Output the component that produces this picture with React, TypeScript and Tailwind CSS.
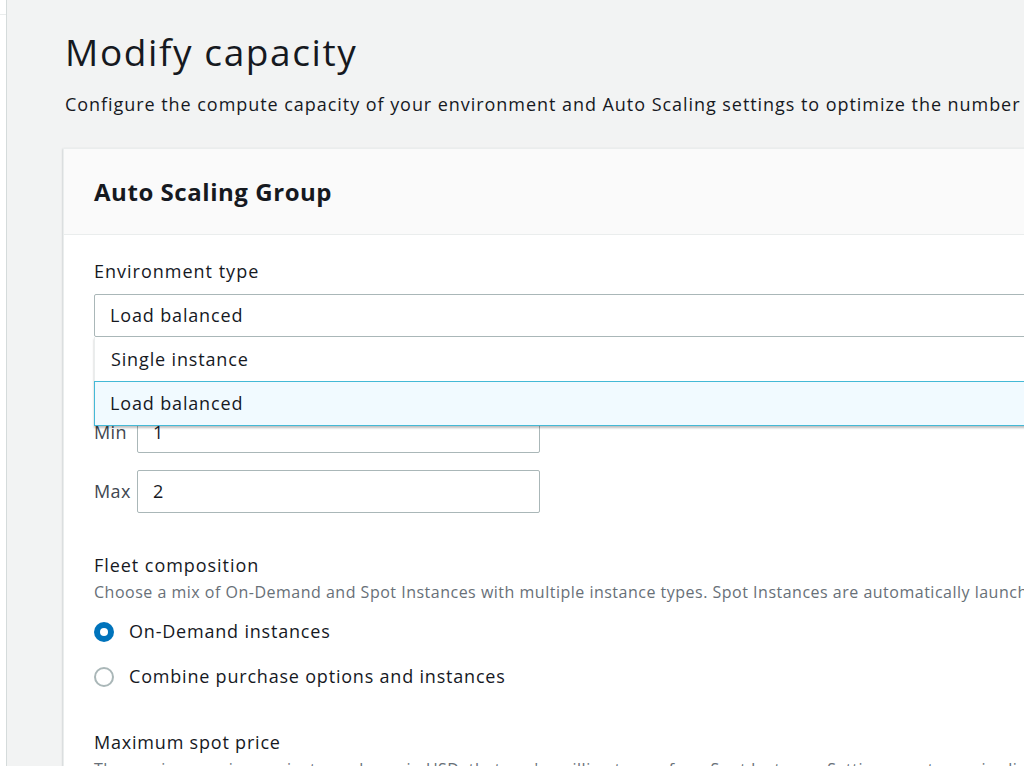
import React from "react";

const font = { fontFamily: '"Open Sans", "Noto Sans", sans-serif' };

const Radio = ({ checked, label }: { checked?: boolean; label: string }) => (
  <label className="flex items-center gap-[15px] h-[45px] text-[18px] tracking-[0.8px] text-[#16191f]">
    {checked ? (
      <span className="w-[20px] h-[20px] rounded-full bg-[#0073bb] flex items-center justify-center">
        <span className="w-[8px] h-[8px] rounded-full bg-white" />
      </span>
    ) : (
      <span className="w-[20px] h-[20px] rounded-full border-2 border-[#aab7b8] bg-white" />
    )}
    {label}
  </label>
);

export default function App() {
  return (
    <div className="w-full h-[766px] flex overflow-hidden bg-[#f2f3f3] tracking-[0.85px]" style={font}>
      <div className="w-[7px] shrink-0 bg-white border-r border-[#d5dbdb] flex flex-col">
        <div className="h-[15px] border-b border-[#eaeded]" />
      </div>
      <main className="flex-1 min-w-0 pl-[58px] pt-[26px]">
        <h1 className="text-[37px] leading-[52px] tracking-[1.6px] text-[#16191f] whitespace-nowrap">Modify capacity</h1>
        <p className="mt-[12px] text-[18px] leading-[28px] tracking-[0.95px] text-[#16191f] whitespace-nowrap">
          Configure the compute capacity of your environment and Auto Scaling settings to optimize the number of instances used.
        </p>
        <section className="mt-[30px] w-[1100px] -ml-[2px] bg-white border-l border-t border-[#eaeded] shadow-[0_1px_2px_rgba(0,28,36,0.3)]">
          <header className="h-[86px] bg-[#fafafa] border-b border-[#eaeded] pl-[30px] flex items-center">
            <h2 className="text-[24px] font-bold tracking-[0.55px] text-[#16191f] whitespace-nowrap">Auto Scaling Group</h2>
          </header>
          <div className="pl-[30px] pt-[22px]">
            <div className="text-[18px] leading-[28px] tracking-[1px] text-[#16191f]">Environment type</div>
            <div className="relative mt-[9px]">
              <div className="h-[43px] border border-[#aab7b8] rounded-[2px] pl-[15px] flex items-center text-[18px] text-[#16191f]">
                Load balanced
              </div>
              <ul className="absolute left-0 right-0 top-[43px] z-10 bg-white shadow-[0_2px_2px_rgba(0,0,0,0.25)]">
                <li className="h-[44px] pl-[16px] flex items-center text-[18px] text-[#16191f] border-x border-[#eaeded]">
                  Single instance
                </li>
                <li className="h-[45px] pl-[15px] flex items-center text-[18px] text-[#16191f] bg-[#f1faff] border border-[#44b9d6]">
                  Load balanced
                </li>
              </ul>
            </div>
            <div className="mt-[20px] text-[18px] leading-[28px] text-[#16191f]">Instances</div>
            <div className="mt-[26px] flex flex-col gap-[17px]">
              <div className="flex items-center gap-[6px]">
                <span className="w-[37px] text-[18px] tracking-[0.4px] text-[#414750]">Min</span>
                <div className="w-[403px] h-[42px] border border-[#aab7b8] rounded-[2px] bg-white pl-[15px] flex items-center text-[18px] text-[#16191f]">1</div>
              </div>
              <div className="flex items-center gap-[6px]">
                <span className="w-[37px] text-[18px] tracking-[0.4px] text-[#414750]">Max</span>
                <div className="w-[403px] h-[43px] border border-[#aab7b8] rounded-[2px] bg-white pl-[15px] flex items-center text-[18px] text-[#16191f]">2</div>
              </div>
            </div>
            <div className="mt-[38px] text-[18px] leading-[28px] tracking-[0.95px] text-[#16191f]">Fleet composition</div>
            <p className="text-[16px] leading-[26px] tracking-[0.5px] text-[#687078] whitespace-nowrap">
              Choose a mix of On-Demand and Spot Instances with multiple instance types. Spot Instances are automatically launched at the lowest price.
            </p>
            <div className="mt-[4px] flex flex-col">
              <Radio checked label="On-Demand instances" />
              <Radio label="Combine purchase options and instances" />
            </div>
            <div className="mt-[29px] text-[18px] leading-[28px] tracking-[0.8px] text-[#16191f]">Maximum spot price</div>
            <p className="text-[16px] leading-[26px] tracking-[0.5px] text-[#687078] whitespace-nowrap">
              The maximum price per instance-hour, in USD, that you're willing to pay for a Spot Instance. Setting a custom price limits your chances.
            </p>
          </div>
        </section>
      </main>
    </div>
  );
}
